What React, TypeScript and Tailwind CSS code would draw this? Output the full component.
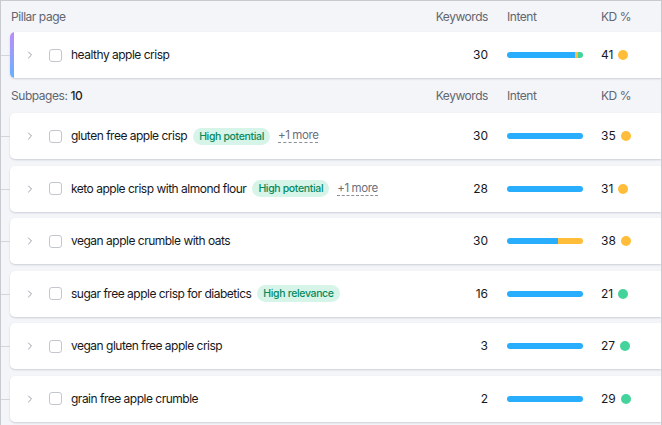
import React from 'react';
import { ChevronRight } from 'lucide-react';

type Row = {
  name: string;
  badge?: string;
  more?: boolean;
  keywords: number;
  intent: { color: string; pct: number }[];
  kd: number;
  kdColor: string;
};

const BLUE = '#28aefc';
const ORANGE = '#ffbd39';
const GREEN = '#45d39c';

const rows: Row[] = [
  { name: 'gluten free apple crisp', badge: 'High potential', more: true, keywords: 30, intent: [{ color: BLUE, pct: 100 }], kd: 35, kdColor: ORANGE },
  { name: 'keto apple crisp with almond flour', badge: 'High potential', more: true, keywords: 28, intent: [{ color: BLUE, pct: 100 }], kd: 31, kdColor: ORANGE },
  { name: 'vegan apple crumble with oats', keywords: 30, intent: [{ color: BLUE, pct: 67 }, { color: ORANGE, pct: 33 }], kd: 38, kdColor: ORANGE },
  { name: 'sugar free apple crisp for diabetics', badge: 'High relevance', keywords: 16, intent: [{ color: BLUE, pct: 100 }], kd: 21, kdColor: GREEN },
  { name: 'vegan gluten free apple crisp', keywords: 3, intent: [{ color: BLUE, pct: 100 }], kd: 27, kdColor: GREEN },
  { name: 'grain free apple crumble', keywords: 2, intent: [{ color: BLUE, pct: 100 }], kd: 29, kdColor: GREEN },
];

const pillarIntent = [
  { color: BLUE, pct: 89 },
  { color: ORANGE, pct: 4 },
  { color: GREEN, pct: 7 },
];

const IntentBar = ({ parts }: { parts: { color: string; pct: number }[] }) => (
  <div className="flex h-[6px] w-[76px] overflow-hidden rounded-full">
    {parts.map((p, i) => (
      <div key={i} className="h-full" style={{ width: `${p.pct}%`, backgroundColor: p.color }} />
    ))}
  </div>
);

const Columns = ({ keywords, intent, kd }: { keywords: React.ReactNode; intent: React.ReactNode; kd: React.ReactNode }) => (
  <div className="flex shrink-0 items-center pr-[18px] text-[12px] leading-[16px]">
    <div className="w-[60px] text-right">{keywords}</div>
    <div className="ml-[19px] flex w-[76px] items-center">{intent}</div>
    <div className="ml-[18px] w-[42px]">{kd}</div>
  </div>
);

const HeaderRow = ({ label }: { label: React.ReactNode }) => (
  <div className="flex items-center pl-[1px] text-[12px] tracking-[-0.45px] text-[#62666f]">
    <div className="min-w-0 flex-1">{label}</div>
    <Columns keywords="Keywords" intent="Intent" kd="KD %" />
  </div>
);

const Card = ({ row, pillar }: { row: Row; pillar?: boolean }) => (
  <div className="relative">
    <div className="absolute left-[-10px] top-1/2 h-px w-[10px] bg-[#d4d6dc]" />
    <div className="flex h-[46px] items-center overflow-hidden rounded-l-[5px] bg-white shadow-[0_1px_2px_rgba(30,35,60,0.18)]">
      {pillar && <div className="h-full w-[4px] shrink-0 bg-gradient-to-b from-[#b98cf8] to-[#5fb0ff]" />}
      <div className={`flex min-w-0 flex-1 items-center ${pillar ? 'pl-[10px]' : 'pl-[14px]'}`}>
        <ChevronRight size={12} strokeWidth={2} className="shrink-0 text-[#9a9ea8]" />
        <div className="ml-[13px] h-[13px] w-[13px] shrink-0 rounded-[3px] border border-[#c3c6ce] bg-white" />
        <span className="ml-[9px] whitespace-nowrap text-[12px] tracking-[-0.5px] text-[#16181d]">{row.name}</span>
        {row.badge && (
          <span className="ml-[6px] whitespace-nowrap rounded-full bg-[#d6f4e8] px-[6px] py-[1px] text-[10.5px] font-medium leading-[15px] tracking-[-0.35px] text-[#078a5e]">
            {row.badge}
          </span>
        )}
        {row.more && (
          <span className="ml-[8px] whitespace-nowrap border-b border-dashed border-[#8a8e98] text-[11.5px] leading-[13px] tracking-[-0.4px] text-[#6b6f7a]">
            +1 more
          </span>
        )}
      </div>
      <Columns
        keywords={<span className="text-[#16181d]">{row.keywords}</span>}
        intent={<IntentBar parts={row.intent} />}
        kd={
          <div className="flex items-center gap-[5px] text-[#16181d]">
            <span>{row.kd}</span>
            <span className="h-[10px] w-[10px] rounded-full" style={{ backgroundColor: row.kdColor }} />
          </div>
        }
      />
    </div>
  </div>
);

export default function App() {
  return (
    <div
      className="h-[425px] w-[662px] overflow-hidden border-x border-t border-[#c8cad0] bg-[#f4f5f9]"
      style={{ fontFamily: 'Inter, "Noto Sans", sans-serif' }}
    >
      <div className="flex h-[31px] flex-col justify-center pl-[9px]">
        <HeaderRow label="Pillar page" />
      </div>
      <div className="pl-[9px]">
        <Card
          pillar
          row={{ name: 'healthy apple crisp', keywords: 30, intent: pillarIntent, kd: 41, kdColor: ORANGE }}
        />
      </div>
      <div className="flex h-[35px] flex-col justify-center pl-[9px]">
        <HeaderRow
          label={
            <span>
              Subpages: <span className="font-medium text-[#1d1f26]">10</span>
            </span>
          }
        />
      </div>
      <div className="flex flex-col gap-[6.6px] pl-[9px]">
        {rows.map((r) => (
          <Card key={r.name} row={r} />
        ))}
      </div>
    </div>
  );
}
